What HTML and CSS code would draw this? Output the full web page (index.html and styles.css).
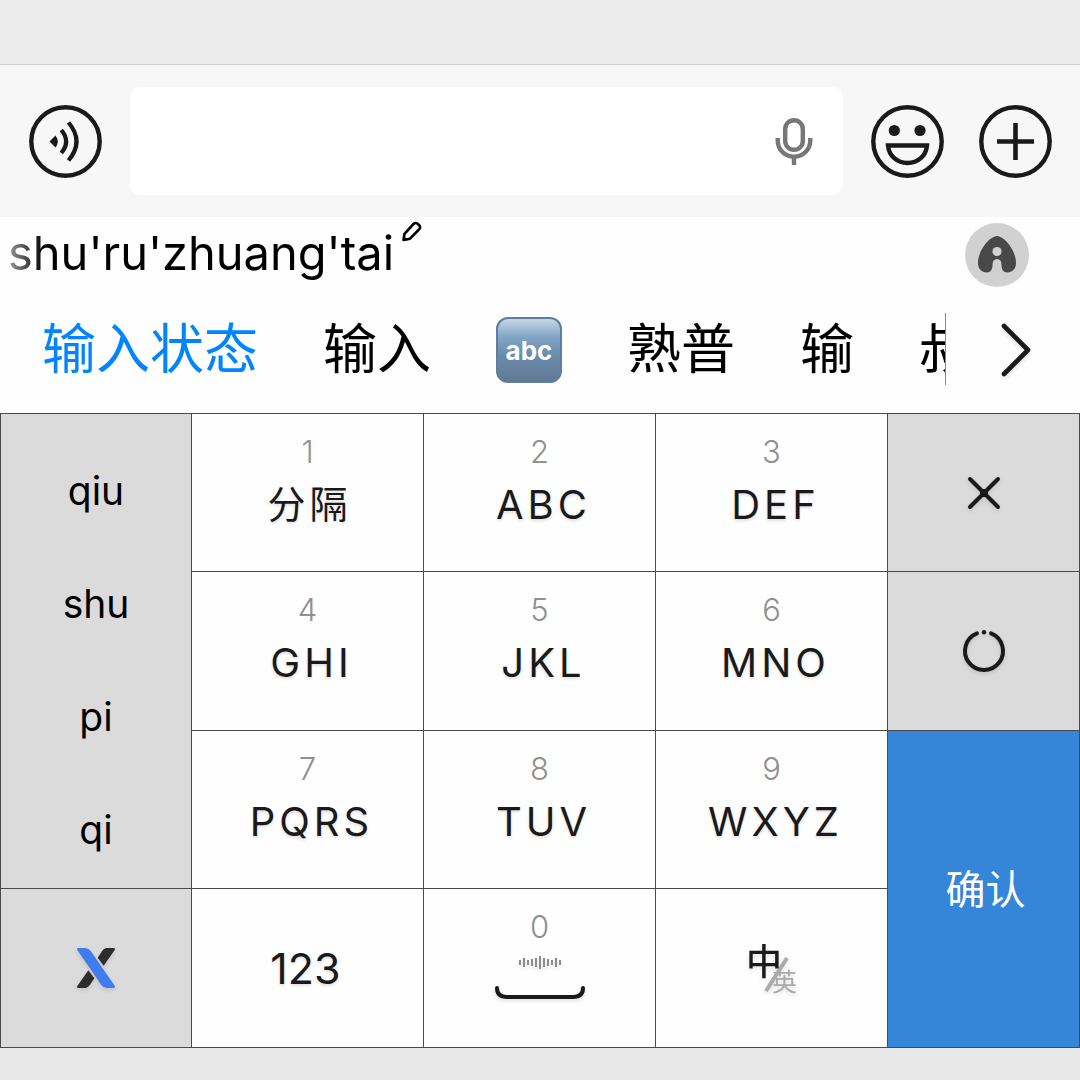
FILE: index.html
```html
<!DOCTYPE html>
<html lang="zh-CN">
<head>
  <meta charset="UTF-8">
  <meta name="viewport" content="width=device-width, initial-scale=1">
  <title>输入状态</title>
  <link rel="stylesheet" href="styles.css">
</head>
<body>
  <div class="chat"></div>

  <div class="toolbar">
    <button type="button" class="icon-btn" aria-label="语音">
      <svg width="73" height="73" viewBox="0 0 73 73" fill="none" stroke="#1a1a1a">
        <circle cx="36.5" cy="36.5" r="34.2" stroke-width="4.4"/>
        <path d="M20.5 36.5 L26.5 30.5 Q31 36.5 26.5 42.5 Z" fill="#1a1a1a" stroke="none"/>
        <path d="M32.3 25 Q42 36.5 32.3 48 M39.5 17.5 Q55.5 36.5 39.5 55.5" stroke-width="4.2"/>
      </svg>
    </button>
    <div class="field">
      <input type="text" id="message" aria-label="消息">
      <button type="button" class="mic" aria-label="语音输入">
        <svg width="38" height="48" viewBox="0 0 38 48" fill="none" stroke="#777" stroke-width="4.4">
          <rect x="10.2" y="3.2" width="17.6" height="29.6" rx="8.8"/>
          <path d="M2.7 21 V23.5 A16.3 16.3 0 0 0 35.3 23.5 V21 M19 40 V48"/>
        </svg>
      </button>
    </div>
    <div class="actions">
      <button type="button" class="icon-btn" aria-label="表情">
        <svg width="73" height="73" viewBox="0 0 73 73" fill="none" stroke="#1a1a1a">
          <circle cx="36.5" cy="36.5" r="34.2" stroke-width="4.4"/>
          <circle cx="23.3" cy="25.5" r="5.6" fill="#1a1a1a" stroke="none"/>
          <circle cx="49" cy="25.5" r="5.6" fill="#1a1a1a" stroke="none"/>
          <path d="M17 40.5 H56 C55 51 47 58 36.5 58 C26 58 18 51 17 40.5 Z" stroke-width="4.4"/>
        </svg>
      </button>
      <button type="button" class="icon-btn" aria-label="更多">
        <svg width="73" height="73" viewBox="0 0 73 73" fill="none" stroke="#1a1a1a">
          <circle cx="36.5" cy="36.5" r="34.2" stroke-width="4.4"/>
          <path d="M18 36.5 H55 M36.5 18 V55" stroke-width="4.6"/>
        </svg>
      </button>
    </div>
  </div>

  <div class="composing">
    <span class="pinyin">shu'ru'zhuang'tai</span>
    <button type="button" class="edit" aria-label="编辑拼音">
      <svg width="22" height="22" viewBox="0 0 22 22" fill="none" stroke="#000" stroke-width="2.6" stroke-linejoin="round">
        <path d="M2.5 19 L3.5 12.8 L12.5 3 Q14.5 1 17 3 L18.3 4.3 Q20 6.3 18 8.5 L9 17.7 Z"/>
        <path d="M2.2 15 L7 19 L2 20 Z" fill="#000" stroke="none"/>
      </svg>
    </button>
    <button type="button" class="assistant" aria-label="助手">
      <svg width="40" height="38" viewBox="0 0 40 38">
        <path d="M20 0 C27 0 39 14 39 27 C39 33 35 36.5 30.5 36.5 C26 36.5 24.5 33 24.5 29 C24.5 25 23 23 20 23 C17 23 15.5 25 15.5 29 C15.5 33 14 36.5 9.5 36.5 C5 36.5 1 33 1 27 C1 14 13 0 20 0 Z" fill="#484848"/>
        <circle cx="20" cy="15.5" r="4.6" fill="#d1d1d1"/>
      </svg>
    </button>
  </div>

  <div class="candidates">
    <div class="words">
      <button type="button" class="word active">输入状态</button>
      <button type="button" class="word">输入</button>
      <button type="button" class="abc">abc</button>
      <button type="button" class="word">熟普</button>
      <button type="button" class="word">输</button>
      <button type="button" class="word">叔</button>
    </div>
    <button type="button" class="expand" aria-label="展开">
      <svg class="shadow" width="30" height="54" viewBox="0 0 30 54" fill="none" stroke="#1a1a1a" stroke-width="4.6" stroke-linecap="round" stroke-linejoin="round">
        <path d="M3 4 L27 28 L3 52"/>
      </svg>
    </button>
  </div>

  <div class="keyboard">
    <div class="syllables">
      <button type="button">qiu</button>
      <button type="button">shu</button>
      <button type="button">pi</button>
      <button type="button">qi</button>
    </div>
    <button type="button" class="key"><span class="num">1</span><span class="cap zh">分隔</span></button>
    <button type="button" class="key"><span class="num">2</span><span class="cap">ABC</span></button>
    <button type="button" class="key"><span class="num">3</span><span class="cap">DEF</span></button>
    <button type="button" class="key side" aria-label="删除">
      <svg class="shadow" width="34" height="34" viewBox="0 0 34 34" fill="none" stroke="#1a1a1a" stroke-width="4" stroke-linecap="round">
        <path d="M3 3 L31 31 M31 3 L3 31"/>
        <circle cx="17" cy="17" r="2" fill="#1a1a1a"/>
      </svg>
    </button>

    <button type="button" class="key"><span class="num">4</span><span class="cap">GHI</span></button>
    <button type="button" class="key"><span class="num">5</span><span class="cap">JKL</span></button>
    <button type="button" class="key"><span class="num">6</span><span class="cap">MNO</span></button>
    <button type="button" class="key side" aria-label="重输">
      <svg class="shadow" width="42" height="42" viewBox="0 0 42 42" fill="none" stroke="#1a1a1a" stroke-width="4" stroke-linecap="round">
        <path d="M14 3.4 A19 19 0 1 0 28 3.4"/>
        <circle cx="21" cy="2.2" r="2.2" fill="#1a1a1a" stroke="none"/>
      </svg>
    </button>

    <button type="button" class="key"><span class="num">7</span><span class="cap">PQRS</span></button>
    <button type="button" class="key"><span class="num">8</span><span class="cap">TUV</span></button>
    <button type="button" class="key"><span class="num">9</span><span class="cap">WXYZ</span></button>
    <button type="button" class="key confirm">确认</button>

    <button type="button" class="key side" aria-label="菜单">
      <svg class="shadow" width="38" height="40" viewBox="0 0 114 120">
        <path d="M88 0 H110 Q116 1 113 6 L80 53 L62 29 L72 14 Q80 1 88 0 Z" fill="#2d2d2d"/>
        <path d="M26 120 H4 Q-2 119 1 114 L34 67 L52 91 L42 106 Q34 119 26 120 Z" fill="#2d2d2d"/>
        <path d="M4 0 H24 Q34 0 41 9 L113 113 Q116 119 110 120 H90 Q80 120 73 111 L1 6 Q-2 1 4 0 Z" fill="#417bf0"/>
      </svg>
    </button>
    <button type="button" class="key digits">123</button>
    <button type="button" class="key space" aria-label="空格">
      <span class="num">0</span>
      <svg class="shadow" width="90" height="44" viewBox="0 0 90 44" fill="none">
        <path d="M25 5 V10 M29 3 V12 M33 5 V10 M37 4 V11 M41 3 V12 M45 1 V14 M49 3 V12 M53 4 V11 M57 5 V10 M61 3 V12 M65 5 V10" stroke="#8c8c8c" stroke-width="2"/>
        <path d="M2 33 Q2 42 12 42 H78 Q88 42 88 33" stroke="#1a1a1a" stroke-width="4" stroke-linecap="round"/>
      </svg>
    </button>
    <button type="button" class="key lang" aria-label="中英切换">
      <svg class="shadow" width="50" height="54" viewBox="0 0 50 54">
        <path d="M19 50 L40 17" stroke="#aaa" stroke-width="4"/>
        <text x="-1" y="34" font-size="36" font-weight="500" fill="#1a1a1a">中</text>
        <text x="25" y="50" font-size="25" fill="#aaa">英</text>
      </svg>
    </button>
  </div>

  <div class="bottom"></div>
</body>
</html>
```
FILE: styles.css
```css
* { box-sizing: border-box; }
body {
  margin: 0;
  min-height: 100vh;
  display: flex;
  flex-direction: column;
  background: #fefefe;
  font-family: Inter, "Noto Sans CJK SC", sans-serif;
  color: #000;
}
button {
  margin: 0;
  padding: 0;
  border: 0;
  background: none;
  font-family: inherit;
  color: inherit;
  cursor: pointer;
}
svg { display: block; }
.shadow { filter: drop-shadow(0 2px 2px rgba(0, 0, 0, 0.12)); overflow: visible; }

.chat { height: 65px; background: #ececec; border-bottom: 1px solid #d0d0d0; }

.toolbar {
  display: flex;
  align-items: center;
  gap: 28px;
  height: 152px;
  padding: 0 28px 0 29px;
  background: #f7f7f7;
}
.field {
  flex: 1;
  display: flex;
  align-items: center;
  height: 108px;
  padding-right: 30px;
  background: #fff;
  border-radius: 10px;
}
.field input {
  flex: 1;
  min-width: 0;
  height: 100%;
  padding: 0 24px;
  border: 0;
  outline: 0;
  background: transparent;
  font-size: 44px;
}
.actions { display: flex; gap: 35px; }

.composing {
  display: flex;
  align-items: flex-start;
  height: 76px;
  padding: 4px 51px 0 8px;
}
.pinyin {
  font-size: 47px;
  line-height: 64px;
  color: transparent;
  background: linear-gradient(90deg, #999, #000 36px);
  -webkit-background-clip: text;
  background-clip: text;
}
.edit { margin-left: 7px; }
.assistant {
  display: flex;
  align-items: center;
  justify-content: center;
  width: 64px;
  height: 64px;
  margin: 2px 0 0 auto;
  border-radius: 50%;
  background: #d1d1d1;
}

.candidates { display: flex; align-items: center; height: 120px; padding-bottom: 8px; }
.words {
  flex: 1;
  min-width: 0;
  display: flex;
  align-items: center;
  gap: 65px;
  height: 72px;
  padding: 2px 0 0 42px;
  overflow: hidden;
  border-right: 1px solid #888;
}
.word { flex: none; font-size: 54px; line-height: 76px; }
.active { color: #0085ff; }
.abc {
  flex: none;
  width: 66px;
  height: 66px;
  border-radius: 12px;
  border: 2px solid #5d7e9f;
  background: linear-gradient(#c5d7e5, #80a3c5 30%, #6b8aaa 60%, #607a94);
  color: #fff;
  font-size: 26px;
  font-weight: 700;
}
.expand { display: flex; justify-content: center; width: 134px; padding-left: 6px; }

.keyboard {
  flex: 1;
  display: grid;
  grid-template-columns: 190fr 231fr 231fr 231fr 191fr;
  grid-template-rows: 157fr 158fr 157fr 158fr;
  gap: 1px;
  padding: 1px;
  background: #4a4a4a;
}
.syllables {
  grid-row: span 3;
  display: flex;
  flex-direction: column;
  padding-top: 20px;
  background: #dbdbdb;
}
.syllables button { height: 113px; font-size: 39px; }
.key {
  display: flex;
  flex-direction: column;
  align-items: center;
  padding-top: 18px;
  background: #fefefe;
  color: #1a1a1a;
}
.num { font-size: 31px; line-height: 40px; font-weight: 300; color: #909090; }
.cap {
  padding-left: 8px;
  font-size: 40px;
  line-height: 66px;
  letter-spacing: 4px;
  text-shadow: 0 2px 3px rgba(0, 0, 0, 0.12);
}
.zh { padding-left: 4px; font-size: 38px; line-height: 64px; }
.side, .confirm, .digits, .lang { justify-content: center; padding-top: 0; }
.side { background: #dbdbdb; }
.confirm { grid-row: span 2; padding: 0 0 4px 4px; background: #3586d8; color: #fff; font-size: 40px; }
.digits { padding-right: 4px; font-size: 43px; text-shadow: 0 2px 3px rgba(0, 0, 0, 0.12); }
.space svg { margin-top: 8px; }

.bottom { height: 32px; background: #e8e8e8; }
```
